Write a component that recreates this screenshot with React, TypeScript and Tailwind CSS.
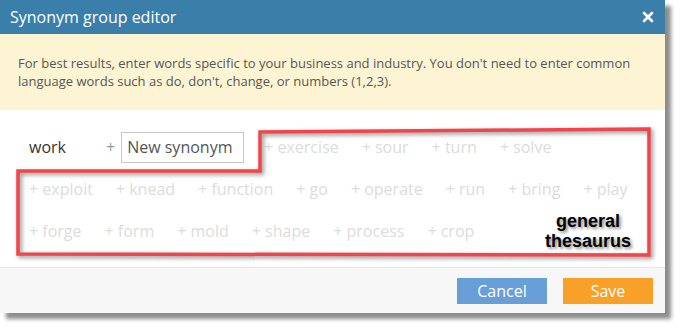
import { X } from "lucide-react";

const suggestions = [
  "exercise", "sour", "turn", "solve",
  "exploit", "knead", "function", "go", "operate", "run", "bring", "play",
  "forge", "form", "mold", "shape", "process", "crop",
];

export default function App() {
  return (
    <div className="min-h-screen bg-white font-['Open_Sans',sans-serif]">
      <div className="relative w-[665px] bg-white shadow-[6px_6px_4px_rgba(0,0,0,0.45)]">
        {/* header */}
        <div className="flex h-[34px] items-center justify-between bg-[#3a7faa] pl-[10px] pr-[9px]">
          <h1 className="text-[16px] text-white">Synonym group editor</h1>
          <button className="text-white">
            <X size={16} strokeWidth={4} />
          </button>
        </div>

        {/* notice */}
        <div className="bg-[#fdf4d3] pl-[18px] pr-[30px] pt-[20px] pb-[20px] text-[13px] leading-[18px] text-[#575757]">
          For best results, enter words specific to your business and industry. You don't need to enter common
          language words such as do, don't, change, or numbers (1,2,3).
        </div>

        {/* synonyms */}
        <div className="flex flex-wrap items-center gap-x-[23px] pl-[29px] pr-[28px] pt-[16px] pb-[15px] text-[16px]">
          <div className="mr-[-3px] flex h-[42px] items-center">
            <span className="w-[77px] text-[#333]">work</span>
            <span className="mr-[6px] text-[#999]">+</span>
            <input
              placeholder="New synonym"
              className="h-[31px] w-[123px] border border-[#c8c8c8] px-[5px] text-[16px] text-[#555] placeholder:text-[#555] outline-none"
            />
          </div>
          {suggestions.map((s) => (
            <span key={s} className="flex h-[42px] items-center text-[#dcdcdc]">
              + {s}
            </span>
          ))}
        </div>

        {/* footer */}
        <div className="flex h-[46px] items-center justify-end gap-[16px] border-t border-[#e6e6e6] bg-[#f7f7f7] pr-[12px]">
          <button className="h-[26px] w-[90px] bg-[#689fd9] text-[16px] text-white">Cancel</button>
          <button className="h-[26px] w-[90px] bg-[#f9a028] text-[16px] text-white">Save</button>
        </div>

        {/* annotation */}
        <svg
          className="pointer-events-none absolute left-0 top-0 drop-shadow-[2px_2px_2px_rgba(0,0,0,0.45)]"
          width="665"
          height="313"
        >
          <polygon
            points="260,132 649,129 649,255 18,254 18,171 260,171"
            fill="none"
            stroke="#f2454b"
            strokeWidth="3.5"
          />
        </svg>
        <div className="pointer-events-none absolute left-[536px] top-[211px] w-[104px] text-center font-['Liberation_Sans',sans-serif] text-[18px] font-bold leading-[20px] text-black [text-shadow:2px_2px_3px_rgba(0,0,0,0.45)]">
          general
          <br />
          thesaurus
        </div>
      </div>
    </div>
  );
}
